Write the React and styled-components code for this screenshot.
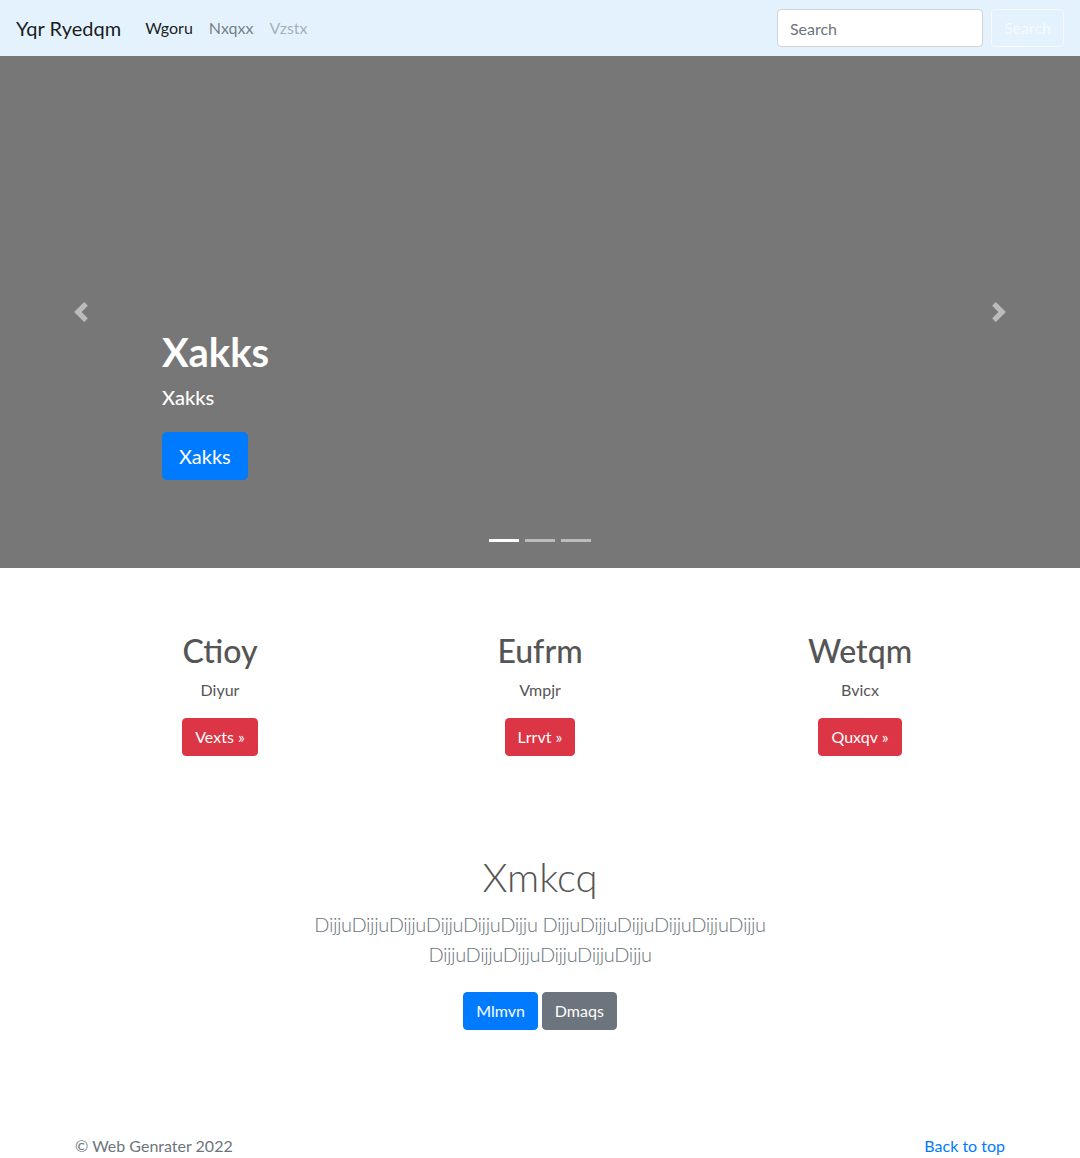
import React from "react";
import styled, { createGlobalStyle } from "styled-components";

const GlobalStyle = createGlobalStyle`
  *, *::before, *::after { box-sizing: border-box; }
  body {
    margin: 0;
    font-family: "Lato", "Noto Sans", sans-serif;
    font-size: 16px;
    line-height: 1.5;
    color: #212529;
    background: #fff;
  }
  h1, h2, p { margin-top: 0; }
`;

const Navbar = styled.nav`
  display: flex;
  align-items: center;
  justify-content: space-between;
  height: 56px;
  padding: 8px 16px;
  background-color: #e3f2fd;
`;

const Left = styled.div`
  display: flex;
  align-items: center;
`;

const Brand = styled.a`
  font-size: 20px;
  color: rgba(0, 0, 0, 0.9);
  margin-right: 16px;
  padding: 5px 0;
  text-decoration: none;
`;

const NavLink = styled.a`
  padding: 8px;
  font-size: 16px;
  text-decoration: none;
  color: ${(p) =>
    p.$state === "active"
      ? "rgba(0,0,0,0.9)"
      : p.$state === "disabled"
      ? "rgba(0,0,0,0.3)"
      : "rgba(0,0,0,0.5)"};
`;

const Form = styled.form`
  display: flex;
  align-items: center;
`;

const Input = styled.input`
  width: 206px;
  height: 38px;
  padding: 6px 12px;
  font: inherit;
  font-size: 16px;
  color: #495057;
  border: 1px solid #ced4da;
  border-radius: 4px;
  background: #fff;
  margin-right: 8px;
  &::placeholder { color: #6c757d; }
`;

const OutlineButton = styled.button`
  height: 38px;
  padding: 6px 12px;
  font: inherit;
  font-size: 16px;
  color: #f8f9fa;
  background: transparent;
  border: 1px solid #f8f9fa;
  border-radius: 4px;
`;

const Carousel = styled.div`
  position: relative;
  height: 512px;
  background-color: #777;
  margin-bottom: 64px;
`;

const Caption = styled.div`
  position: absolute;
  left: 15%;
  right: 15%;
  bottom: 68px;
  padding: 20px 0;
  color: #fff;
  text-align: left;
  z-index: 10;
`;

const CaptionTitle = styled.h1`
  font-size: 40px;
  font-weight: 700;
  line-height: 1.2;
  margin-bottom: 6px;
`;

const CaptionText = styled.p`
  font-size: 20px;
  font-weight: 500;
  margin-bottom: 20px;
`;

const CaptionAction = styled.p`
  margin: 0;
`;

const Button = styled.a`
  display: inline-block;
  font-size: ${(p) => (p.$lg ? "20px" : "16px")};
  line-height: 1.5;
  padding: ${(p) => (p.$lg ? "8px 16px" : "6px 12px")};
  border-radius: ${(p) => (p.$lg ? "4.8px" : "4px")};
  color: #fff;
  text-decoration: none;
  border: 1px solid
    ${(p) => ({ primary: "#007bff", danger: "#dc3545", secondary: "#6c757d" }[p.$variant])};
  background-color: ${(p) =>
    ({ primary: "#007bff", danger: "#dc3545", secondary: "#6c757d" }[p.$variant])};
`;

const Control = styled.a`
  position: absolute;
  top: 0;
  bottom: 0;
  width: 15%;
  display: flex;
  align-items: center;
  justify-content: center;
  opacity: 0.5;
  ${(p) => (p.$side === "left" ? "left: 0;" : "right: 0;")}
`;

const Indicators = styled.ol`
  position: absolute;
  left: 0;
  right: 0;
  bottom: 0;
  display: flex;
  justify-content: center;
  list-style: none;
  margin: 0 0 16px;
  padding: 0;
`;

const Indicator = styled.li`
  width: 30px;
  height: 3px;
  margin: 0 3px;
  box-sizing: content-box;
  border-top: 10px solid transparent;
  border-bottom: 10px solid transparent;
  background-clip: padding-box;
  background-color: #fff;
  opacity: ${(p) => (p.$active ? 1 : 0.5)};
`;

const Container = styled.div`
  width: 960px;
  margin: 0 auto;
  padding: 0 15px;
`;

const Row = styled.div`
  display: grid;
  grid-template-columns: repeat(3, 1fr);
  margin: 0 -15px;
`;

const Col = styled.div`
  text-align: center;
  padding: 0 15px;
  margin-bottom: 24px;
  color: #555;
`;

const ColTitle = styled.h2`
  font-size: 32px;
  font-weight: 500;
  line-height: 1.2;
  margin-bottom: 8px;
`;

const ColText = styled.p`
  margin-bottom: 16px;
`;

const Jumbo = styled.section`
  text-align: center;
  padding: 73px 0 48px;
`;

const JumboInner = styled.div`
  max-width: 640px;
  margin: 0 auto;
  padding: 0 15px;
`;

const JumboTitle = styled.h1`
  font-size: 40px;
  font-weight: 300;
  line-height: 1.2;
  color: #555;
  margin-bottom: 8px;
`;

const Lead = styled.p`
  font-size: 20px;
  font-weight: 300;
  letter-spacing: -0.4px;
  color: #6c757d;
  margin-bottom: 23px;
`;

const ButtonRow = styled.p`
  display: flex;
  justify-content: center;
  gap: 4px;
  margin: 0;
`;

const Footer = styled.footer`
  padding: 56px 0 48px;
  color: #6c757d;
`;

const FooterInner = styled(Container)`
  display: flex;
  justify-content: space-between;
`;

const FooterText = styled.p`
  margin: 0 0 4px;
`;

const FooterLink = styled.a`
  color: #007bff;
  text-decoration: none;
`;

const Chevron = ({ dir }) => (
  <svg width="20" height="20" viewBox="0 0 8 8" fill="#fff">
    {dir === "left" ? (
      <path d="M5.25 0l-4 4 4 4 1.5-1.5L4.25 4l2.5-2.5L5.25 0z" />
    ) : (
      <path d="M2.75 0l-1.5 1.5L3.75 4l-2.5 2.5L2.75 8l4-4-4-4z" />
    )}
  </svg>
);

const features = [
  { title: "Ctioy", text: "Diyur", btn: "Vexts" },
  { title: "Eufrm", text: "Vmpjr", btn: "Lrrvt" },
  { title: "Wetqm", text: "Bvicx", btn: "Quxqv" },
];

export default function App() {
  return (
    <>
      <GlobalStyle />
      <Navbar>
        <Left>
          <Brand href="#">Yqr Ryedqm</Brand>
          <NavLink href="#" $state="active">Wgoru</NavLink>
          <NavLink href="#">Nxqxx</NavLink>
          <NavLink href="#" $state="disabled">Vzstx</NavLink>
        </Left>
        <Form onSubmit={(e) => e.preventDefault()}>
          <Input type="search" placeholder="Search" />
          <OutlineButton type="submit">Search</OutlineButton>
        </Form>
      </Navbar>

      <Carousel>
        <Indicators>
          <Indicator $active />
          <Indicator />
          <Indicator />
        </Indicators>
        <Caption>
          <CaptionTitle>Xakks</CaptionTitle>
          <CaptionText>Xakks</CaptionText>
          <CaptionAction>
            <Button href="#" $variant="primary" $lg>Xakks</Button>
          </CaptionAction>
        </Caption>
        <Control href="#" $side="left">
          <Chevron dir="left" />
        </Control>
        <Control href="#" $side="right">
          <Chevron dir="right" />
        </Control>
      </Carousel>

      <Container>
        <Row>
          {features.map((f) => (
            <Col key={f.title}>
              <ColTitle>{f.title}</ColTitle>
              <ColText>{f.text}</ColText>
              <Button href="#" $variant="danger">{f.btn} »</Button>
            </Col>
          ))}
        </Row>
      </Container>

      <Jumbo>
        <JumboInner>
          <JumboTitle>Xmkcq</JumboTitle>
          <Lead>
            DijjuDijjuDijjuDijjuDijjuDijju DijjuDijjuDijjuDijjuDijjuDijju
            DijjuDijjuDijjuDijjuDijjuDijju
          </Lead>
          <ButtonRow>
            <Button href="#" $variant="primary">Mlmvn</Button>
            <Button href="#" $variant="secondary">Dmaqs</Button>
          </ButtonRow>
        </JumboInner>
      </Jumbo>

      <Footer>
        <FooterInner>
          <FooterText>© Web Genrater 2022</FooterText>
          <FooterText>
            <FooterLink href="#">Back to top</FooterLink>
          </FooterText>
        </FooterInner>
      </Footer>
    </>
  );
}
